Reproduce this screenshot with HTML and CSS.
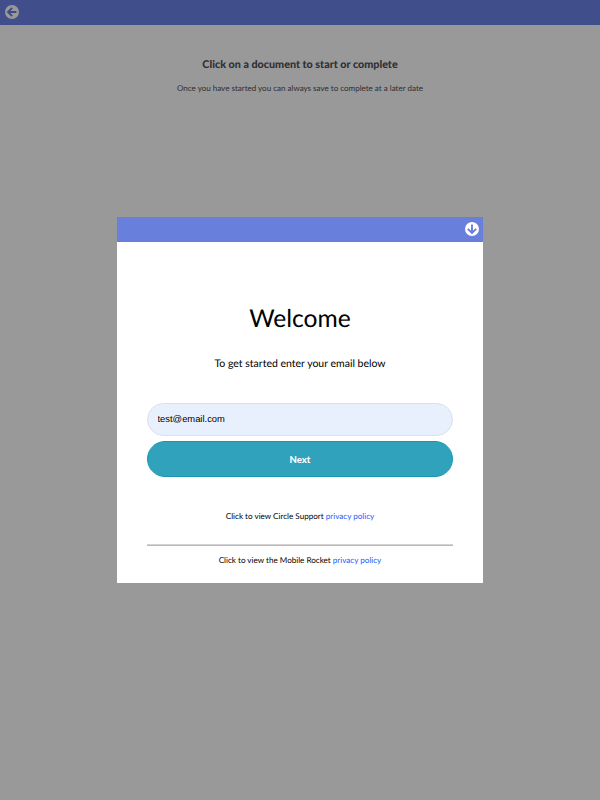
FILE: index.html
```html
<!DOCTYPE html>
<html lang="en">

<head>
    <meta charset="UTF-8">
    <meta name="viewport" content="width=device-width, initial-scale=1.0">
    <title>Documents</title>
    <link rel="stylesheet" href="styles.css">
</head>

<body>
    <header class="topbar">
        <svg class="icon" viewBox="0 0 14 14">
            <circle cx="7" cy="7" r="7" />
            <path d="M11.4 7H3.5M7.2 2.8L3 7L7.2 11.2" />
        </svg>
    </header>

    <main class="documents">
        <h1>Click on a document to start or complete</h1>
        <p>Once you have started you can always save to complete at a later date</p>
    </main>

    <div class="overlay">
        <div class="modal">
            <div class="modal-header">
                <svg class="icon" viewBox="0 0 14 14">
                    <circle cx="7" cy="7" r="7" />
                    <path d="M7 2.6V10.5M2.8 6.8L7 11L11.2 6.8" />
                </svg>
            </div>
            <form class="modal-body">
                <h2>Welcome</h2>
                <p class="intro">To get started enter your email below</p>
                <input class="email" type="email" value="test@email.com">
                <button class="next" type="button">Next</button>
                <p class="policy">Click to view Circle Support <a href="#">privacy policy</a></p>
                <hr>
                <p class="policy">Click to view the Mobile Rocket <a href="#">privacy policy</a></p>
            </form>
        </div>
    </div>
</body>

</html>
```
FILE: styles.css
```css
* {
    box-sizing: border-box;
}

body {
    margin: 0;
    background-color: #fff;
    color: #000;
    font-family: Lato, sans-serif;
    text-align: center;
    text-rendering: geometricPrecision;
}

h1,
h2,
p {
    margin: 0;
}

/* header bars */
.topbar,
.modal-header {
    display: flex;
    align-items: center;
    height: 25px;
    padding: 0 4.5px 1px;
    background-color: #687fdb;
}

.topbar {
    background-color: #6c82e6;
}

.modal-header {
    justify-content: flex-end;
}

.icon {
    width: 14px;
    height: 14px;
}

.icon circle {
    fill: #fff;
}

.icon path {
    fill: none;
    stroke: #687fdb;
    stroke-width: 1.9;
}

/* page behind the modal */
.documents {
    padding-top: 33px;
    color: #505054;
}

.documents h1 {
    font-size: 10.75px;
    font-weight: 900;
    line-height: 14px;
}

.documents p {
    margin-top: 10px;
    font-size: 8.03px;
    line-height: 12px;
}

/* modal */
.overlay {
    position: fixed;
    inset: 0;
    display: flex;
    align-items: center;
    justify-content: center;
    background-color: rgba(0, 0, 3, 0.4);
}

.modal {
    width: 366px;
    height: 366px;
    background-color: #fff;
}

.modal-body {
    padding: 59px 30px 0;
}

.modal-body h2 {
    font-size: 24.6px;
    font-weight: 400;
    line-height: 36px;
}

.intro {
    margin-top: 19px;
    font-size: 10.5px;
    line-height: 16px;
}

.email {
    display: block;
    width: 100%;
    height: 33px;
    margin-top: 31px;
    padding: 0 9.5px 2px;
    border: 1px solid #dcdfe8;
    border-radius: 17px;
    background-color: #e8f0fe;
    color: #000;
    font-family: "Liberation Sans", Arial, sans-serif;
    font-size: 9.4px;
}

.next {
    display: block;
    width: 100%;
    height: 36px;
    margin-top: 5px;
    border: 1px solid #1798b2;
    border-radius: 18px;
    background-color: #31a2bc;
    color: #fff;
    font-family: Lato, sans-serif;
    font-size: 9.5px;
    font-weight: 900;
}

.policy {
    font-size: 8.1px;
    line-height: 12px;
}

.next + .policy {
    margin-top: 33px;
}

.policy a {
    color: #1a5cff;
    text-decoration: none;
}

hr {
    height: 2px;
    margin: 22px 0 8px;
    border: 0;
    border-top: 1px solid #d4d4d4;
    background-color: #b8b8b8;
}
```
